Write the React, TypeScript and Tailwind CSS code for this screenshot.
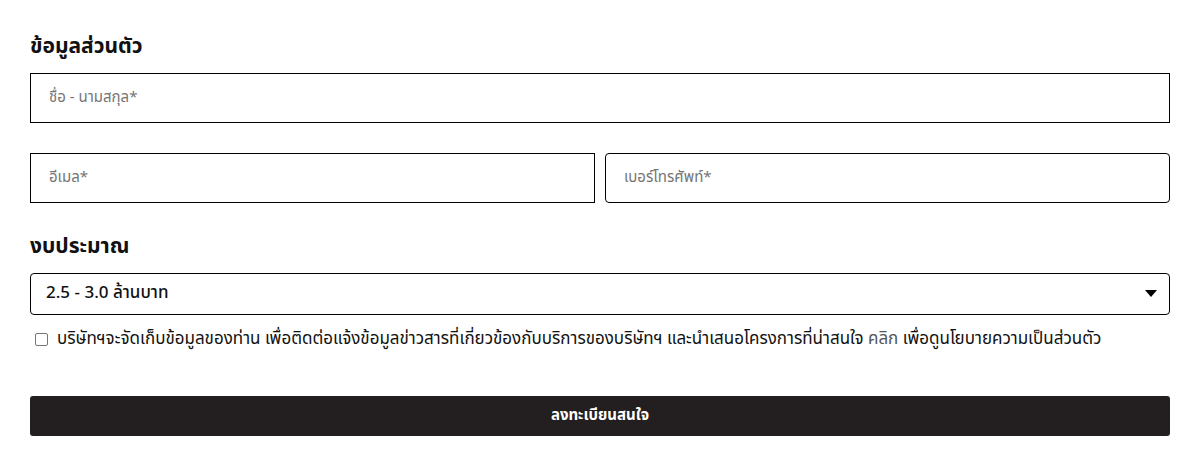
import React from "react";

export default function App() {
  const font = { fontFamily: '"Noto Sans Thai", "Noto Sans", "Liberation Sans", sans-serif' };
  return (
    <div className="w-[1203px] h-[450px] bg-white" style={font}>
      <div className="ml-[30px] w-[1140px] pt-[32px]">
        <h2 className="text-[21px] font-bold text-[#111] leading-[30px]">ข้อมูลส่วนตัว</h2>
        <div className="mt-[11px] h-[50px] border border-black flex items-center pl-[18px] text-[15px] text-[#757575]">
          ชื่อ - นามสกุล*
        </div>
        <div className="mt-[30px] flex gap-[10px]">
          <div className="flex-1 h-[50px] border border-black flex items-center pl-[18px] text-[15px] text-[#757575]">
            อีเมล*
          </div>
          <div className="flex-1 h-[50px] border border-black rounded-[4px] flex items-center pl-[18px] text-[15px] text-[#757575]">
            เบอร์โทรศัพท์*
          </div>
        </div>
        <h2 className="mt-[29px] text-[21px] font-bold text-[#111] leading-[30px]">งบประมาณ</h2>
        <div className="mt-[11px] h-[42px] border border-black rounded-[4px] flex items-center justify-between pl-[15px] pr-[12px] text-[17px] text-[#111] font-medium">
          <span>2.5 - 3.0 ล้านบาท</span>
          <svg width="12" height="8" viewBox="0 0 12 8"><path d="M0 0h12L6 7z" fill="#000" /></svg>
        </div>
        <div className="mt-[12px] flex items-center gap-[9px] text-[17px] text-[#111] pl-[5px] leading-[24px]">
          <span className="w-[13px] h-[13px] border border-[#767676] rounded-[2px] inline-block shrink-0" />
          <span>
            บริษัทฯจะจัดเก็บข้อมูลของท่าน เพื่อติดต่อแจ้งข้อมูลข่าวสารที่เกี่ยวข้องกับบริการของบริษัทฯ และนำเสนอโครงการที่น่าสนใจ <span className="text-[#555]">คลิก</span> เพื่อดูนโยบายความเป็นส่วนตัว
          </span>
        </div>
        <div className="mt-[45px] h-[40px] bg-[#231f20] rounded-[3px] flex items-center justify-center text-white text-[15px] font-bold">
          ลงทะเบียนสนใจ
        </div>
      </div>
    </div>
  );
}
